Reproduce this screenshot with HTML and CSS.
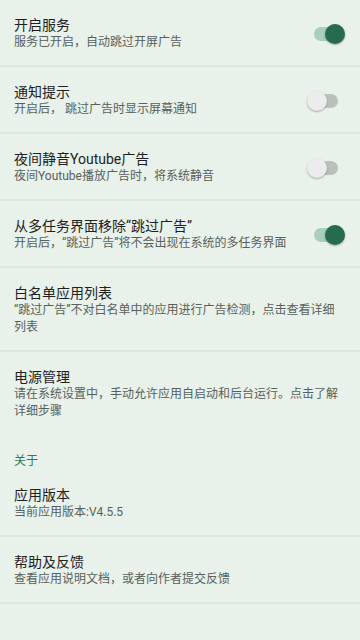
FILE: index.html
```html
<!DOCTYPE html>
<html lang="zh-CN">
  <head>
    <meta charset="utf-8">
    <title>设置</title>
    <link rel="stylesheet" href="styles.css">
  </head>
  <body>
    <main class="prefs">
      <div class="pref">
        <div class="pref__text">
          <div class="pref__title">开启服务</div>
          <div class="pref__summary">服务已开启，自动跳过开屏广告</div>
        </div>
        <span class="switch switch--on"><span class="switch__track"></span><span class="switch__thumb"></span></span>
      </div>
      <div class="pref">
        <div class="pref__text">
          <div class="pref__title">通知提示</div>
          <div class="pref__summary">开启后， 跳过广告时显示屏幕通知</div>
        </div>
        <span class="switch"><span class="switch__track"></span><span class="switch__thumb"></span></span>
      </div>
      <div class="pref">
        <div class="pref__text">
          <div class="pref__title">夜间静音Youtube广告</div>
          <div class="pref__summary">夜间Youtube播放广告时，将系统静音</div>
        </div>
        <span class="switch"><span class="switch__track"></span><span class="switch__thumb"></span></span>
      </div>
      <div class="pref">
        <div class="pref__text">
          <div class="pref__title">从多任务界面移除“跳过广告”</div>
          <div class="pref__summary">开启后，“跳过广告”将不会出现在系统的多任务界面</div>
        </div>
        <span class="switch switch--on"><span class="switch__track"></span><span class="switch__thumb"></span></span>
      </div>
      <div class="pref pref--plain">
        <div class="pref__text">
          <div class="pref__title">白名单应用列表</div>
          <div class="pref__summary">“跳过广告”不对白名单中的应用进行广告检测，点击查看详细列表</div>
        </div>
      </div>
      <div class="pref pref--plain pref--last">
        <div class="pref__text">
          <div class="pref__title">电源管理</div>
          <div class="pref__summary">请在系统设置中，手动允许应用自启动和后台运行。点击了解详细步骤</div>
        </div>
      </div>

      <div class="category">关于</div>
      <div class="pref pref--plain">
        <div class="pref__text">
          <div class="pref__title">应用版本</div>
          <div class="pref__summary">当前应用版本:V4.5.5</div>
        </div>
      </div>
      <div class="pref pref--plain">
        <div class="pref__text">
          <div class="pref__title">帮助及反馈</div>
          <div class="pref__summary">查看应用说明文档，或者向作者提交反馈</div>
        </div>
      </div>
    </main>
  </body>
</html>
```

FILE: styles.css
```css
html,
body {
  margin: 0;
  background: #e8f2ea;
}

body {
  font-family: Roboto, "Noto Sans CJK SC", sans-serif;
  color: #1e211f;
  min-height: 640px;
}

.pref {
  display: flex;
  align-items: center;
  padding: 16px 0 14px 14px;
  border-bottom: 2px solid #dbe7dd;
}

.pref--plain {
  padding-right: 20px;
}

.pref--last {
  border-bottom-color: transparent;
}

.pref__text {
  flex: 1;
  min-width: 0;
}

.pref__title {
  font-size: 14px;
  line-height: 18px;
}

.pref__summary {
  font-size: 12px;
  line-height: 17px;
  color: #58605b;
}

.category {
  padding: 17px 0 0 14px;
  height: 17px;
  font-size: 12px;
  line-height: 16px;
  color: #2d7a55;
}

.switch {
  position: relative;
  flex: none;
  width: 38px;
  height: 20px;
  margin: 0 15px 0 8px;
}

.switch__track {
  position: absolute;
  left: 7px;
  top: 3px;
  width: 24px;
  height: 14px;
  border-radius: 7px;
  background: #b7c2bb;
}

.switch__thumb {
  position: absolute;
  left: 0;
  top: 0;
  width: 20px;
  height: 20px;
  border-radius: 50%;
  background: #ececec;
  box-shadow: 0 1px 2px rgba(0, 0, 0, .3);
}

.switch--on .switch__track {
  background: #a7cfbb;
}

.switch--on .switch__thumb {
  left: 18px;
  background: #256b4c;
}
```
